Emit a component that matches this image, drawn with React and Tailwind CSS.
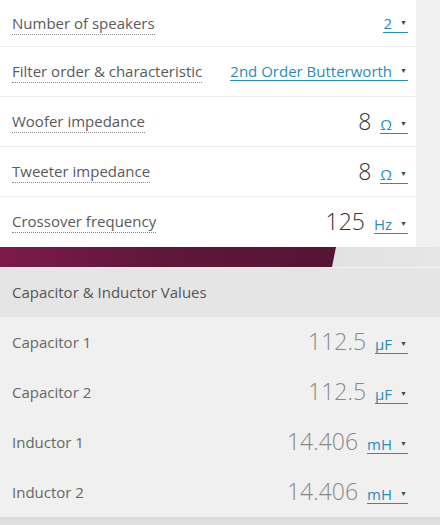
import React from "react";

const font = { fontFamily: '"Segoe UI", "Open Sans", "Noto Sans", sans-serif' };

function Unit({ children }) {
  return (
    <span className="ml-[9px] inline-flex items-center text-[15px] text-[#2a8cb8] leading-[18px] border-b border-[#2a8cb8]">
      {children}
      <span className="ml-[8px] mr-[1px] text-[7px] text-[#2f4f66]">▼</span>
    </span>
  );
}

function Label({ children }) {
  return (
    <span className="text-[15px] text-[#5a5a5a] leading-[20px] border-b border-dotted border-[#8a8a8a] pb-[1px]">{children}</span>
  );
}

function TopRow({ label, first, children }) {
  return (
    <div className={`flex items-center justify-between pl-[12px] pr-[8px] border-b border-[#ececec] ${first ? "h-[47px] pt-[1px]" : "h-[50px]"}`}>
      <Label>{label}</Label>
      <div className="flex items-baseline">{children}</div>
    </div>
  );
}

function BottomRow({ label, value, unit }) {
  return (
    <div className="flex items-center justify-between pl-[12px] pr-[32px] h-[50px]">
      <span className="text-[15px] text-[#666]">{label}</span>
      <div className="flex items-baseline">
        <span className="text-[23px] font-light text-[#888] leading-none">{value}</span>
        <Unit>{unit}</Unit>
      </div>
    </div>
  );
}

export default function App() {
  return (
    <div className="w-[440px] h-[525px] overflow-hidden bg-[#f1f1f1] flex flex-col" style={font}>
      <div className="w-[416px] bg-white flex flex-col">
        <TopRow label="Number of speakers" first>
          <Unit>2</Unit>
        </TopRow>
        <TopRow label="Filter order & characteristic">
          <Unit>2nd Order Butterworth</Unit>
        </TopRow>
        <TopRow label="Woofer impedance">
          <span className="text-[23px] font-light text-[#333] leading-none">8</span>
          <Unit>Ω</Unit>
        </TopRow>
        <TopRow label="Tweeter impedance">
          <span className="text-[23px] font-light text-[#333] leading-none">8</span>
          <Unit>Ω</Unit>
        </TopRow>
        <div className="flex items-center justify-between pl-[12px] pr-[8px] h-[50px]">
          <Label>Crossover frequency</Label>
          <div className="flex items-baseline">
            <span className="text-[23px] font-light text-[#333] leading-none">125</span>
            <Unit>Hz</Unit>
          </div>
        </div>
      </div>
      <div className="flex h-[20px] bg-gradient-to-r from-[#d6d6d6] to-[#e6e6e6]">
        <div className="w-[336px] h-full bg-gradient-to-r from-[#7c1a4a] via-[#5e1738] to-[#561433] [clip-path:polygon(0_0,100%_0,calc(100%-4px)_100%,0_100%)]" />
      </div>
      <div className="h-[1px] bg-[#f3f3f3]" />
      <div className="bg-[#f0f0f0] flex flex-col">
        <div className="h-[49px] bg-[#e5e5e5] flex items-center pl-[12px]">
          <span className="text-[15px] text-[#555]">Capacitor &amp; Inductor Values</span>
        </div>
        <BottomRow label="Capacitor 1" value="112.5" unit="µF" />
        <BottomRow label="Capacitor 2" value="112.5" unit="µF" />
        <BottomRow label="Inductor 1" value="14.406" unit="mH" />
        <BottomRow label="Inductor 2" value="14.406" unit="mH" />
      </div>
      <div className="flex-1 bg-gradient-to-b from-[#d9d9d9] to-[#e2e2e2]" />
    </div>
  );
}
